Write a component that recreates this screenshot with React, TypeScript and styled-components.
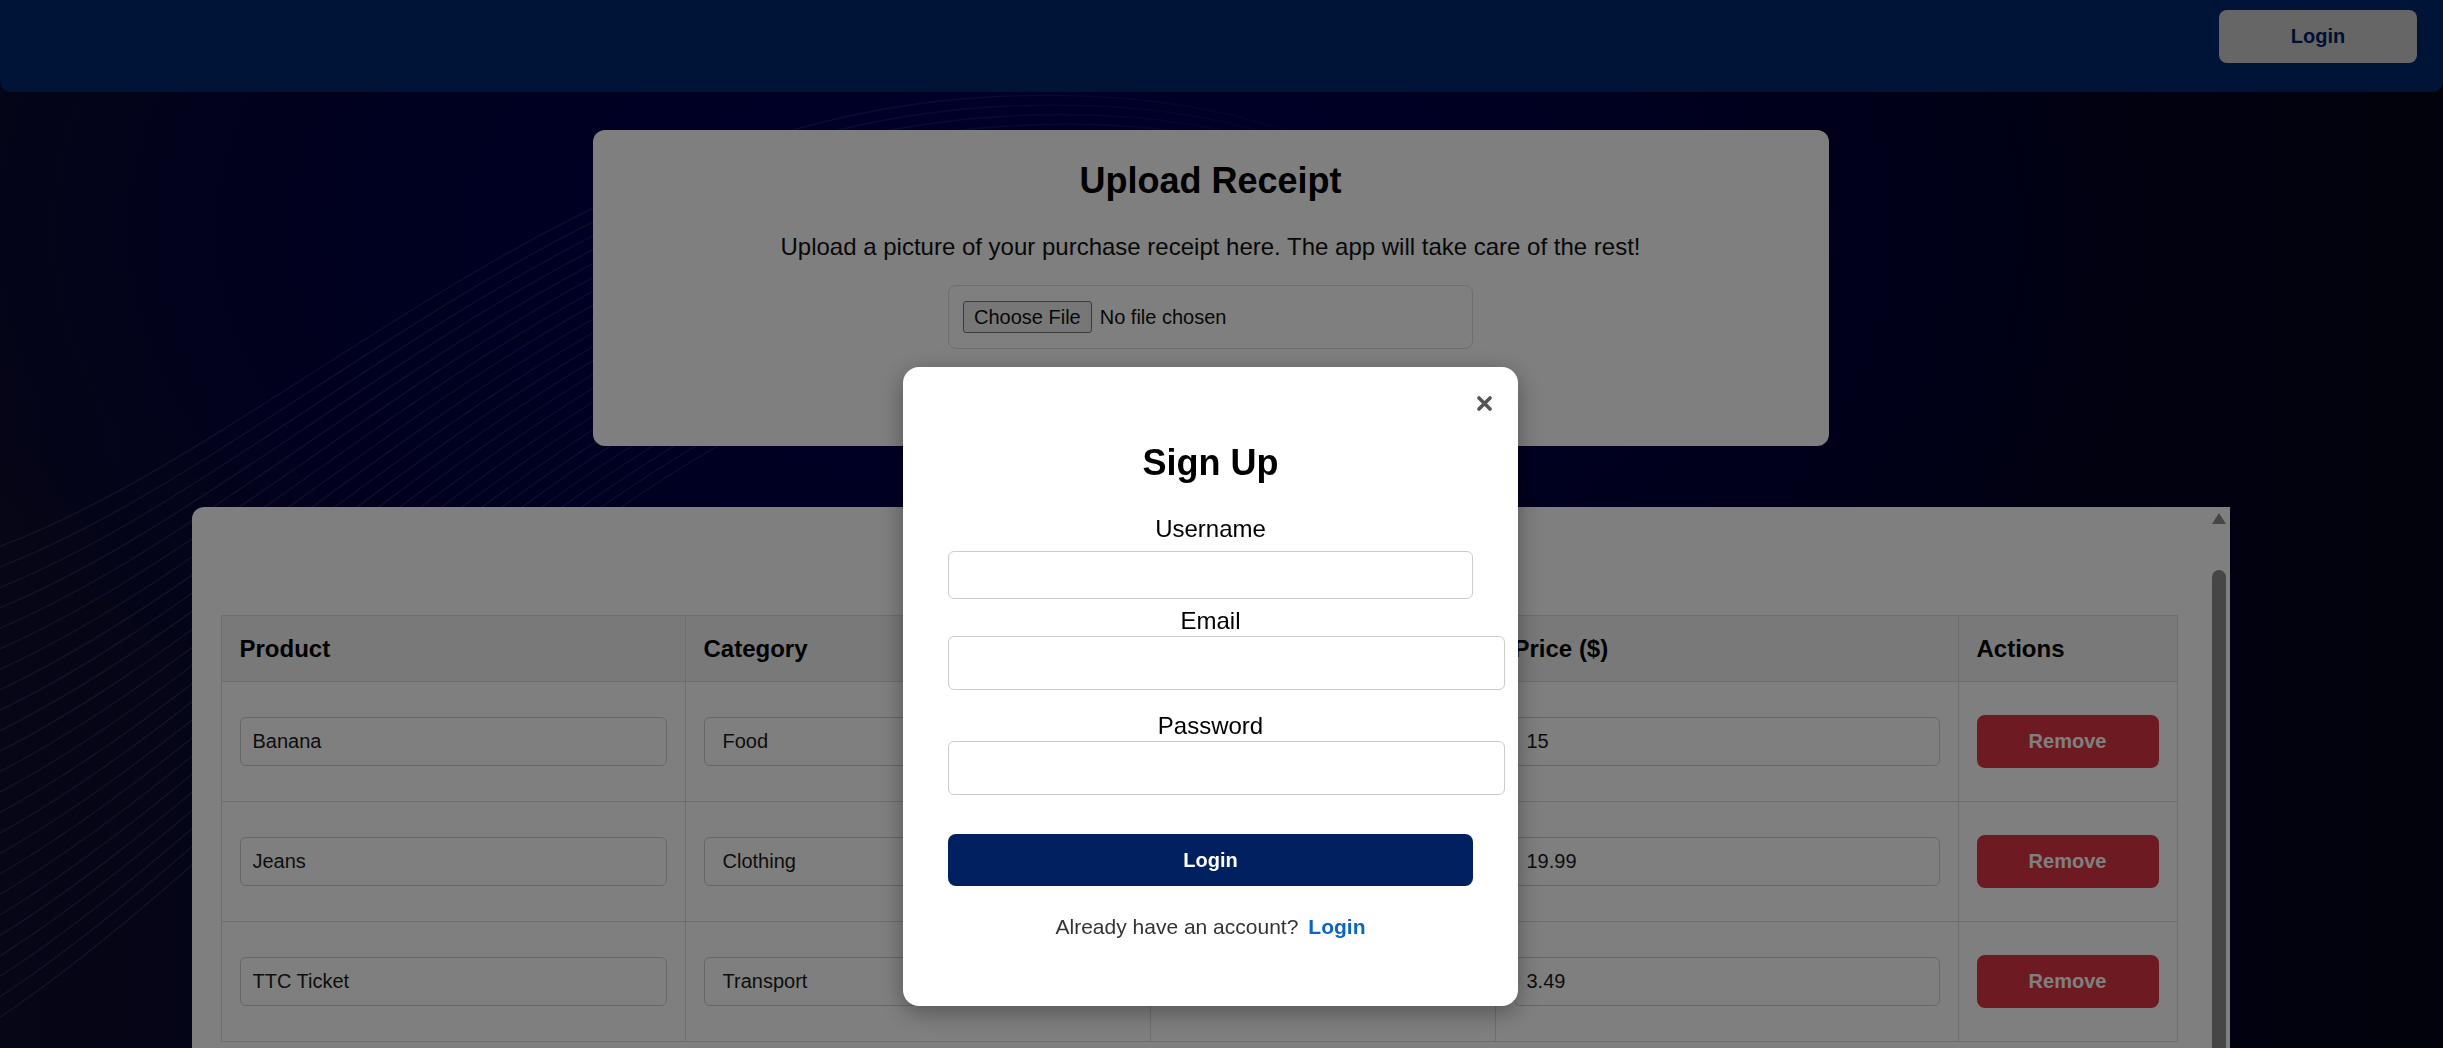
import React from 'react';
import styled, { createGlobalStyle } from 'styled-components';

const GlobalStyle = createGlobalStyle`
  html,
  body {
    margin: 0;
    padding: 0;
  }
  body {
    font-family: 'Liberation Sans', Arial, sans-serif;
    background: #05051a;
  }
`;

const items = [
  { product: 'Banana', category: 'Food', qty: '1', price: '15' },
  { product: 'Jeans', category: 'Clothing', qty: '1', price: '19.99' },
  { product: 'TTC Ticket', category: 'Transport', qty: '1', price: '3.49' },
];

const Page = styled.div`
  position: relative;
  height: 100vh;
  overflow: hidden;
  background: radial-gradient(ellipse 55% 75% at 42% 22%, #00005a 0%, #000042 45%, rgba(0, 0, 40, 0) 85%),
    linear-gradient(90deg, #0c0c2c 0%, #00003a 40%, #00002a 70%, #05051a 100%);
`;

const Waves = styled.svg`
  position: absolute;
  inset: 0;
  width: 100%;
  height: 100%;
  pointer-events: none;
`;

const Content = styled.div`
  position: relative;
  z-index: 1;
`;

const Header = styled.header`
  height: 92px;
  display: flex;
  justify-content: flex-end;
  align-items: flex-start;
  padding: 10px 26px 0;
  box-sizing: border-box;
  background: #002870;
  border-radius: 0 0 10px 10px;
`;

const HeaderButton = styled.button`
  width: 198px;
  height: 53px;
  border: none;
  border-radius: 8px;
  background: #cccccc;
  color: #002366;
  font-family: inherit;
  font-size: 20px;
  font-weight: 700;
`;

const Main = styled.main`
  display: flex;
  flex-direction: column;
  align-items: center;
  padding-right: 22px;
`;

const UploadCard = styled.section`
  width: 1236px;
  margin-top: 38px;
  padding: 30px 0 31px;
  box-sizing: border-box;
  background: #fff;
  border-radius: 12px;
  display: flex;
  flex-direction: column;
  align-items: center;
`;

const CardTitle = styled.h2`
  margin: 0;
  font-size: 36px;
  font-weight: 700;
  color: #000;
`;

const Lead = styled.p`
  margin: 31px 0 0;
  font-size: 24px;
  color: #111;
`;

const FileBox = styled.div`
  width: 525px;
  margin-top: 24px;
  padding: 15px 14px;
  box-sizing: border-box;
  border: 1px solid #dcdcdc;
  border-radius: 8px;
  display: flex;

  input {
    font-family: 'Liberation Sans', Arial, sans-serif;
    font-size: 20px;
    color: #111;
    height: 32px;
  }
  input::file-selector-button {
    font-family: inherit;
    font-size: 20px;
    height: 32px;
    padding: 0 10px;
    margin-right: 8px;
    background: #efefef;
    border: 1px solid #767676;
    border-radius: 3px;
    color: #111;
  }
`;

const UploadButton = styled.button`
  margin-top: 22px;
  width: 220px;
  height: 44px;
  border: none;
  border-radius: 8px;
  background: #002060;
  color: #fff;
  font-family: inherit;
  font-size: 20px;
  font-weight: 700;
`;

const TableCard = styled.section`
  position: relative;
  width: 2038px;
  margin-top: 61px;
  padding: 0 53px 140px 29px;
  box-sizing: border-box;
  background: #fff;
  border-radius: 12px 0 0 0;
`;

/* the card's own scroll bar, drawn over its right edge */
const ScrollRail = styled.div`
  position: absolute;
  top: 0;
  right: 0;
  bottom: 0;
  width: 18px;
  display: flex;
  flex-direction: column;
  align-items: flex-start;
`;

const RailArrow = styled.div`
  margin-top: 6px;
  width: 0;
  height: 0;
  border-left: 7px solid transparent;
  border-right: 7px solid transparent;
  border-bottom: 11px solid #8c8c8c;
`;

const RailThumb = styled.div`
  margin-top: 46px;
  flex: 1;
  width: 14px;
  border-radius: 7px;
  background: #8c8c8c;
`;

const TableTitle = styled.h2`
  margin: 0;
  padding: 30px 0;
  line-height: 48px;
  text-align: center;
  font-size: 36px;
  color: #000;
`;

const Table = styled.table`
  width: 100%;
  table-layout: fixed;
  border-collapse: collapse;
`;

const HeadCell = styled.th`
  height: 65px;
  padding: 0 18px;
  text-align: left;
  font-size: 24px;
  font-weight: 700;
  color: #000;
  background: #f2f2f2;
  border: 1px solid #dcdcdc;
`;

const Cell = styled.td`
  height: 119px;
  padding: 0 18px;
  vertical-align: middle;
  border: 1px solid #dcdcdc;
`;

const CellInput = styled.input<{ $indent?: number }>`
  width: 100%;
  height: 49px;
  box-sizing: border-box;
  padding: 0 ${(p) => p.$indent ?? 12}px;
  border: 1px solid #cfcfcf;
  border-radius: 6px;
  background: #fff;
  font-family: inherit;
  font-size: 20px;
  color: #1a1a1a;
`;

const RemoveButton = styled.button`
  width: 100%;
  height: 53px;
  border: none;
  border-radius: 8px;
  background: #dc3545;
  color: #fff;
  font-family: inherit;
  font-size: 20px;
  font-weight: 700;
`;

const Overlay = styled.div`
  position: fixed;
  inset: 0;
  z-index: 10;
  background: rgba(0, 0, 0, 0.5);
  display: flex;
  justify-content: center;
  align-items: flex-start;
  padding: 367px 22px 0 0;
`;

const Modal = styled.div`
  position: relative;
  width: 615px;
  padding: 75px 45px 67px;
  box-sizing: border-box;
  background: #fff;
  border-radius: 16px;
  box-shadow: 0 6px 24px rgba(0, 0, 0, 0.35);
  display: flex;
  flex-direction: column;
`;

const CloseButton = styled.button`
  position: absolute;
  top: 25px;
  right: 23px;
  width: 22px;
  height: 22px;
  padding: 0;
  border: none;
  background: none;
  display: flex;
  align-items: center;
  justify-content: center;
`;

const ModalTitle = styled.h2`
  margin: 0;
  text-align: center;
  font-size: 36px;
  font-weight: 700;
  color: #000;
`;

const FieldLabel = styled.label<{ $mt: number }>`
  display: block;
  margin-top: ${(p) => p.$mt}px;
  text-align: center;
  font-size: 24px;
  color: #000;
`;

const FieldInput = styled.input<{ $mt: number; $wide?: boolean }>`
  display: block;
  margin-top: ${(p) => p.$mt}px;
  font-family: inherit;
  font-size: 20px;
  border: 1px solid #cccccc;
  border-radius: 6px;
  background: #fff;
  ${(p) =>
    p.$wide
      ? `width: 100%; box-sizing: content-box; padding: 15px; height: 22px;`
      : `width: 100%; box-sizing: border-box; padding: 0 12px; height: 48px;`}
`;

const SubmitButton = styled.button`
  margin-top: 39px;
  width: 100%;
  height: 52px;
  border: none;
  border-radius: 8px;
  background: #002060;
  color: #fff;
  font-family: inherit;
  font-size: 20px;
  font-weight: 700;
`;

const SwitchLine = styled.p`
  margin: 29px 0 0;
  text-align: center;
  font-size: 21px;
  color: #333;
`;

const SwitchLink = styled.a`
  margin-left: 10px;
  color: #0a66c2;
  font-weight: 700;
  text-decoration: none;
`;

function WaveLines(): JSX.Element {
  const lines = Array.from({ length: 24 }, (_, i) => (
    <path
      key={i}
      d={`M -40 ${560 + i * 21} C 260 ${470 + i * 17}, 560 ${110 + i * 14}, 1010 ${96 + i * 10} S 1500 ${330 + i * 12}, 1900 ${520 + i * 12}`}
    />
  ));
  return (
    <Waves viewBox='0 0 2443 1048' preserveAspectRatio='none'>
      <defs>
        <linearGradient id='waveFade' gradientUnits='userSpaceOnUse' x1='0' y1='0' x2='1500' y2='0'>
          <stop offset='0' stopColor='#7880e0' stopOpacity='0.24' />
          <stop offset='0.6' stopColor='#7880e0' stopOpacity='0.18' />
          <stop offset='1' stopColor='#7880e0' stopOpacity='0' />
        </linearGradient>
      </defs>
      <g fill='none' stroke='url(#waveFade)' strokeWidth='1.3'>
        {lines}
      </g>
    </Waves>
  );
}

export default function App(): JSX.Element {
  return (
    <>
      <GlobalStyle />
      <Page>
        <WaveLines />
        <Content>
          <Header>
            <HeaderButton type='button'>Login</HeaderButton>
          </Header>
          <Main>
            <UploadCard>
              <CardTitle>Upload Receipt</CardTitle>
              <Lead>Upload a picture of your purchase receipt here. The app will take care of the rest!</Lead>
              <FileBox>
                <input type='file' accept='image/*' />
              </FileBox>
              <UploadButton type='button'>Upload</UploadButton>
            </UploadCard>

            <TableCard>
              <TableTitle>Receipt Items</TableTitle>
              <Table>
                <colgroup>
                  <col style={{ width: 464 }} />
                  <col style={{ width: 465 }} />
                  <col style={{ width: 345 }} />
                  <col style={{ width: 463 }} />
                  <col style={{ width: 219 }} />
                </colgroup>
                <thead>
                  <tr>
                    <HeadCell>Product</HeadCell>
                    <HeadCell>Category</HeadCell>
                    <HeadCell>Quantity</HeadCell>
                    <HeadCell>Price ($)</HeadCell>
                    <HeadCell>Actions</HeadCell>
                  </tr>
                </thead>
                <tbody>
                  {items.map((item) => (
                    <tr key={item.product}>
                      <Cell>
                        <CellInput defaultValue={item.product} />
                      </Cell>
                      <Cell>
                        <CellInput defaultValue={item.category} $indent={18} />
                      </Cell>
                      <Cell>
                        <CellInput defaultValue={item.qty} />
                      </Cell>
                      <Cell>
                        <CellInput defaultValue={item.price} />
                      </Cell>
                      <Cell>
                        <RemoveButton type='button'>Remove</RemoveButton>
                      </Cell>
                    </tr>
                  ))}
                </tbody>
              </Table>
              <ScrollRail>
                <RailArrow />
                <RailThumb />
              </ScrollRail>
            </TableCard>
          </Main>
        </Content>

        <Overlay>
          <Modal>
            <CloseButton type='button' aria-label='Close'>
              <svg width='19' height='19' viewBox='0 0 24 24'>
                <path d='M5 5 L19 19 M19 5 L5 19' stroke='#555' strokeWidth='4.6' strokeLinecap='round' />
              </svg>
            </CloseButton>
            <ModalTitle>Sign Up</ModalTitle>
            <FieldLabel $mt={31} htmlFor='username'>
              Username
            </FieldLabel>
            <FieldInput $mt={8} id='username' type='text' />
            <FieldLabel $mt={8} htmlFor='email'>
              Email
            </FieldLabel>
            <FieldInput $mt={1} $wide id='email' type='email' />
            <FieldLabel $mt={22} htmlFor='password'>
              Password
            </FieldLabel>
            <FieldInput $mt={1} $wide id='password' type='password' />
            <SubmitButton type='button'>Login</SubmitButton>
            <SwitchLine>
              Already have an account?
              <SwitchLink href='#'>Login</SwitchLink>
            </SwitchLine>
          </Modal>
        </Overlay>
      </Page>
    </>
  );
}
